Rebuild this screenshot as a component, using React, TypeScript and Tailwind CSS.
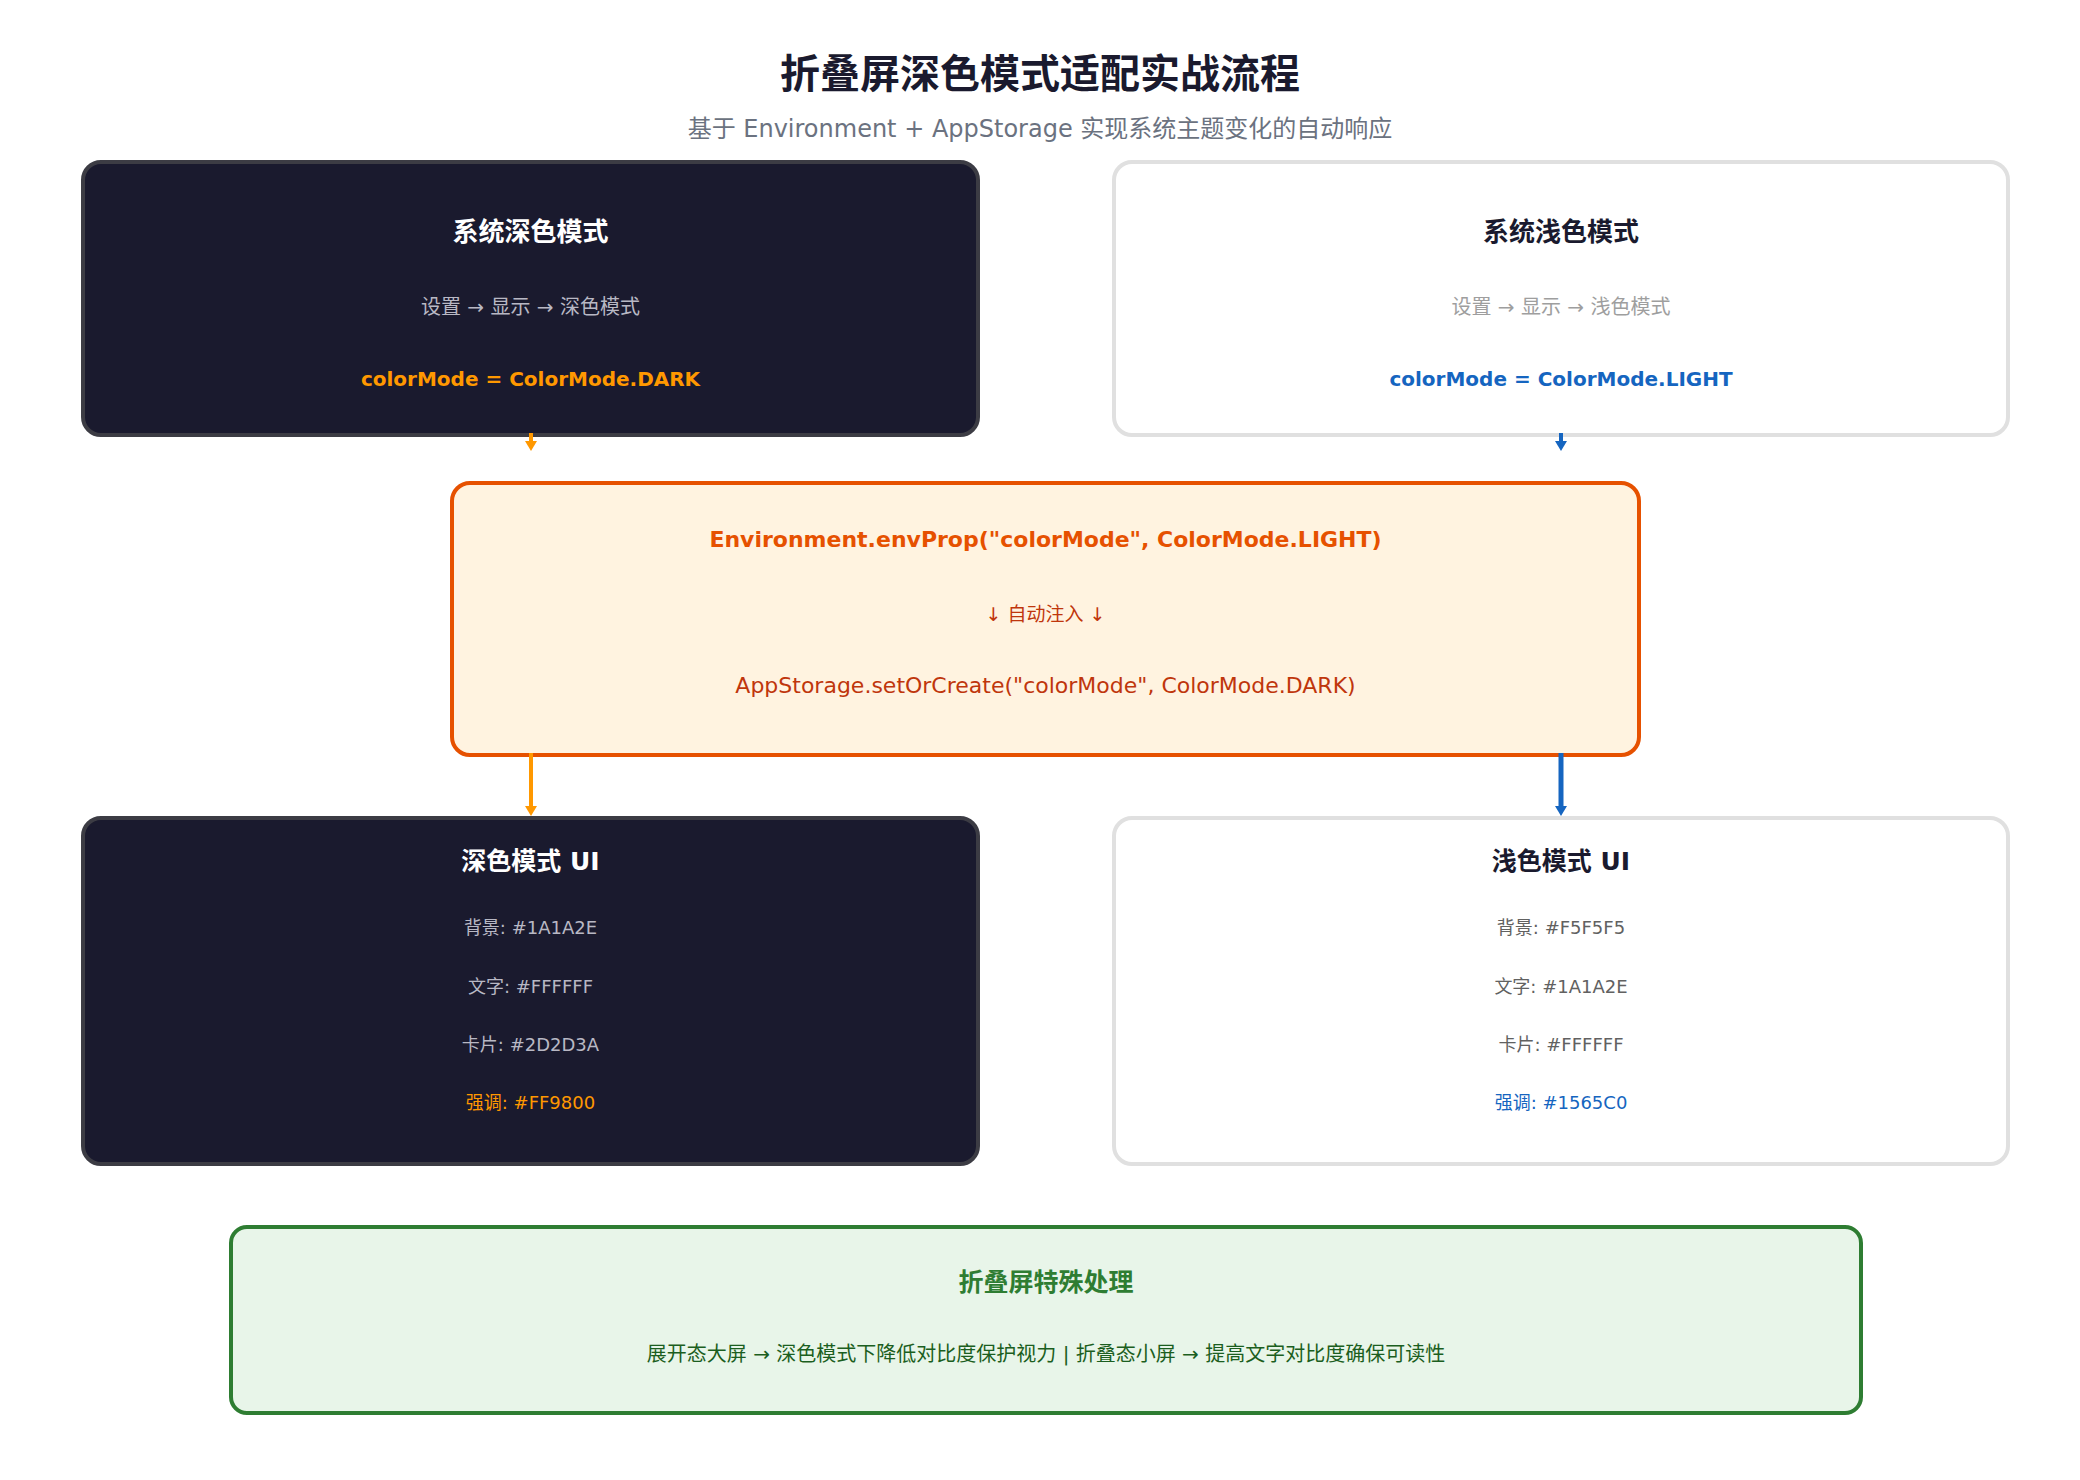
import React from "react";

const font = { fontFamily: '"DejaVu Sans", "Noto Sans CJK SC", sans-serif' };

function Arrow({ color, h, w = 4 }: { color: string; h: number; w?: number }) {
  return (
    <svg width="20" height={h} viewBox={`0 0 20 ${h}`}>
      <line x1="10" y1="0" x2="10" y2={h - 6} stroke={color} strokeWidth={w} />
      <path d={`M4 ${h - 10} L10 ${h} L16 ${h - 10} Z`} fill={color} />
    </svg>
  );
}

export default function App() {
  return (
    <div className="w-[2080px] h-[1480px] bg-white flex flex-col" style={font}>
      <div className="pt-[50px] text-center text-[40px] font-bold leading-[48px] text-[#1a1a2e]">折叠屏深色模式适配实战流程</div>
      <div className="mt-[16px] text-center text-[24px] leading-[30px] text-[#6b7280]">基于 Environment + AppStorage 实现系统主题变化的自动响应</div>
      <div className="mt-[16px] flex pl-[81px] gap-[132px]">
        <div className="w-[899px] h-[277px] rounded-[20px] border-4 border-[#3c3c44] bg-[#1a1a2e] flex flex-col items-center">
          <div className="mt-[52px] text-[26px] font-bold text-white leading-[32px]">系统深色模式</div>
          <div className="mt-[46px] text-[20px] text-[#b8b8c4] leading-[26px]">设置 → 显示 → 深色模式</div>
          <div className="mt-[46px] text-[20px] font-bold text-[#ff9800] leading-[26px]">colorMode = ColorMode.DARK</div>
        </div>
        <div className="w-[898px] h-[277px] rounded-[20px] border-4 border-[#e0e0e0] bg-white flex flex-col items-center">
          <div className="mt-[52px] text-[26px] font-bold text-[#1a1a2e] leading-[32px]">系统浅色模式</div>
          <div className="mt-[46px] text-[20px] text-[#9e9e9e] leading-[26px]">设置 → 显示 → 浅色模式</div>
          <div className="mt-[46px] text-[20px] font-bold text-[#1565c0] leading-[26px]">colorMode = ColorMode.LIGHT</div>
        </div>
      </div>
      <div className="flex pl-[81px] gap-[132px] h-[44px]">
        <div className="w-[899px] flex justify-center -mt-[4px]"><Arrow color="#ff9800" h={18} /></div>
        <div className="w-[898px] flex justify-center -mt-[4px]"><Arrow color="#1565c0" h={18} /></div>
      </div>
      <div className="pl-[450px]">
        <div className="w-[1191px] h-[276px] rounded-[20px] border-4 border-[#e65100] bg-[#fff3e0] flex flex-col items-center">
          <div className="mt-[40px] text-[22px] font-bold text-[#e65100] leading-[30px]">Environment.envProp("colorMode", ColorMode.LIGHT)</div>
          <div className="mt-[46px] text-[19px] text-[#bf360c] leading-[26px]">↓ 自动注入 ↓</div>
          <div className="mt-[44px] text-[22px] text-[#bf360c] leading-[30px]">AppStorage.setOrCreate("colorMode", ColorMode.DARK)</div>
        </div>
      </div>
      <div className="flex pl-[81px] gap-[132px] h-[59px]">
        <div className="w-[899px] flex justify-center -mt-[4px]"><Arrow color="#ff9800" h={63} /></div>
        <div className="w-[898px] flex justify-center -mt-[4px]"><Arrow color="#1565c0" h={63} w={5} /></div>
      </div>
      <div className="flex pl-[81px] gap-[132px]">
        <div className="w-[899px] h-[350px] rounded-[20px] border-4 border-[#3c3c44] bg-[#1a1a2e] flex flex-col items-center text-[18px] leading-[24px]">
          <div className="mt-[26px] text-[25px] font-bold text-white leading-[32px]">深色模式 UI</div>
          <div className="mt-[38px] text-[#b8b8c4]">背景: #1A1A2E</div>
          <div className="mt-[35px] text-[#b8b8c4]">文字: #FFFFFF</div>
          <div className="mt-[34px] text-[#b8b8c4]">卡片: #2D2D3A</div>
          <div className="mt-[34px] text-[#ff9800]">强调: #FF9800</div>
        </div>
        <div className="w-[898px] h-[350px] rounded-[20px] border-4 border-[#e0e0e0] bg-white flex flex-col items-center text-[18px] leading-[24px]">
          <div className="mt-[26px] text-[25px] font-bold text-[#1a1a2e] leading-[32px]">浅色模式 UI</div>
          <div className="mt-[38px] text-[#616161]">背景: #F5F5F5</div>
          <div className="mt-[35px] text-[#616161]">文字: #1A1A2E</div>
          <div className="mt-[34px] text-[#616161]">卡片: #FFFFFF</div>
          <div className="mt-[34px] text-[#1565c0]">强调: #1565C0</div>
        </div>
      </div>
      <div className="pl-[229px] mt-[59px]">
        <div className="w-[1634px] h-[190px] rounded-[18px] border-4 border-[#2e7d32] bg-[#e8f5e9] flex flex-col items-center">
          <div className="mt-[38px] text-[25px] font-bold text-[#2e7d32] leading-[32px]">折叠屏特殊处理</div>
          <div className="mt-[42px] text-[20px] text-[#1b5e20] leading-[26px]">展开态大屏 → 深色模式下降低对比度保护视力 | 折叠态小屏 → 提高文字对比度确保可读性</div>
        </div>
      </div>
    </div>
  );
}
